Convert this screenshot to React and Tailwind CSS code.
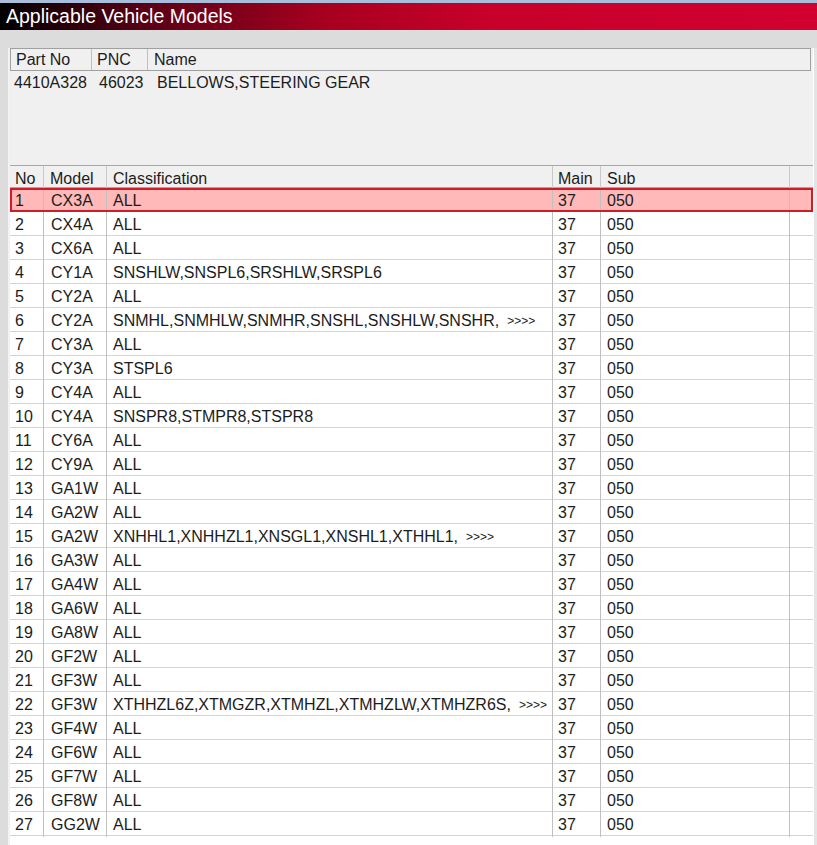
const rows = [
  ["1", "CX3A", "ALL"],
  ["2", "CX4A", "ALL"],
  ["3", "CX6A", "ALL"],
  ["4", "CY1A", "SNSHLW,SNSPL6,SRSHLW,SRSPL6"],
  ["5", "CY2A", "ALL"],
  ["6", "CY2A", "SNMHL,SNMHLW,SNMHR,SNSHL,SNSHLW,SNSHR,", true],
  ["7", "CY3A", "ALL"],
  ["8", "CY3A", "STSPL6"],
  ["9", "CY4A", "ALL"],
  ["10", "CY4A", "SNSPR8,STMPR8,STSPR8"],
  ["11", "CY6A", "ALL"],
  ["12", "CY9A", "ALL"],
  ["13", "GA1W", "ALL"],
  ["14", "GA2W", "ALL"],
  ["15", "GA2W", "XNHHL1,XNHHZL1,XNSGL1,XNSHL1,XTHHL1,", true],
  ["16", "GA3W", "ALL"],
  ["17", "GA4W", "ALL"],
  ["18", "GA6W", "ALL"],
  ["19", "GA8W", "ALL"],
  ["20", "GF2W", "ALL"],
  ["21", "GF3W", "ALL"],
  ["22", "GF3W", "XTHHZL6Z,XTMGZR,XTMHZL,XTMHZLW,XTMHZR6S,", true],
  ["23", "GF4W", "ALL"],
  ["24", "GF6W", "ALL"],
  ["25", "GF7W", "ALL"],
  ["26", "GF8W", "ALL"],
  ["27", "GG2W", "ALL"],
]

const cols = "grid grid-cols-[34px_63px_446px_48px_189px_1fr]"

const App = () => {
  return (
    <div className="w-[817px] h-[845px] overflow-hidden bg-[#dcdcdc] text-[16px] text-[#1c1c1c] font-['Liberation_Sans',Arial,sans-serif]">
      <div className="h-[3px] bg-[#a8bedb]" />
      <div className="h-[27px] pl-[6px] flex items-center text-white text-[19.5px] leading-none bg-[linear-gradient(to_right,#000000_0%,#5a0016_18%,#a8001f_40%,#c8002a_60%,#d20030_100%)]">
        Applicable Vehicle Models
      </div>
      <div className="h-[18px]" />

      <div className="flex">
        <div className="w-[9px] border-r border-[#f4f4f4]" />
        <div className="w-[804px] bg-[#f0f0f0]">
          {/* part info */}
          <div className="h-[117px] pl-px">
            <div className="w-[801px] h-[23px] border border-[#a0a0a0] flex items-center">
              <div className="w-[81px] h-full pl-[5px] pt-px border-r border-[#c0c0c0] flex items-center">Part No</div>
              <div className="w-[56px] h-full pl-[5px] pt-px border-r border-[#c0c0c0] flex items-center">PNC</div>
              <div className="flex-1 pl-[6px] pt-px">Name</div>
            </div>
            <div className="flex h-[24px] items-center">
              <div className="w-[86px] pl-[4px]">4410A328</div>
              <div className="w-[58px] pl-[3px]">46023</div>
              <div className="pl-[3px]">BELLOWS,STEERING GEAR</div>
            </div>
          </div>

          {/* model list */}
          <div className="pl-px">
            <div className={`${cols} h-[23px] border-t border-b border-[#a8a8a8] bg-[#f0f0f0]`}>
              <div className="pl-[5px] pt-px flex items-center border-r border-[#c8c8c8]">No</div>
              <div className="pl-[6px] pt-px flex items-center border-r border-[#c8c8c8]">Model</div>
              <div className="pl-[6px] pt-px flex items-center border-r border-[#c8c8c8]">Classification</div>
              <div className="pl-[5px] pt-px flex items-center border-r border-[#c8c8c8]">Main</div>
              <div className="pl-[6px] pt-px flex items-center border-r border-[#c8c8c8]">Sub</div>
              <div />
            </div>
            <div className="bg-white">
              {rows.map(([no, model, cls, more], i) => {
                const sel = i === 0
                return (
                  <div
                    key={no}
                    className={`${cols} h-[24px] border-b border-[#d4d4d4] ${sel ? "bg-[#ffb9b9] outline-2 outline-[#d01c26] -outline-offset-2" : ""}`}
                  >
                    <div className="flex items-center pt-px pl-[5px] border-r border-[#c0c0c0]">{no}</div>
                    <div className="flex items-center pt-px pl-[7px] border-r border-[#c0c0c0]">{model}</div>
                    <div className="flex items-center pt-px pl-[6px] border-r border-[#c0c0c0] whitespace-nowrap">
                      {cls}
                      {more && <span className="ml-[8px] text-[12px]">&gt;&gt;&gt;&gt;</span>}
                    </div>
                    <div className="flex items-center pt-px pl-[5px] border-r border-[#c0c0c0]">37</div>
                    <div className="flex items-center pt-px pl-[6px] border-r border-[#c0c0c0]">050</div>
                    <div />
                  </div>
                )
              })}
              <div className="h-[20px]" />
            </div>
          </div>
        </div>
        <div className="w-[4px] border-l border-white bg-[#e4e4e4]" />
      </div>
    </div>
  )
}

export default App
